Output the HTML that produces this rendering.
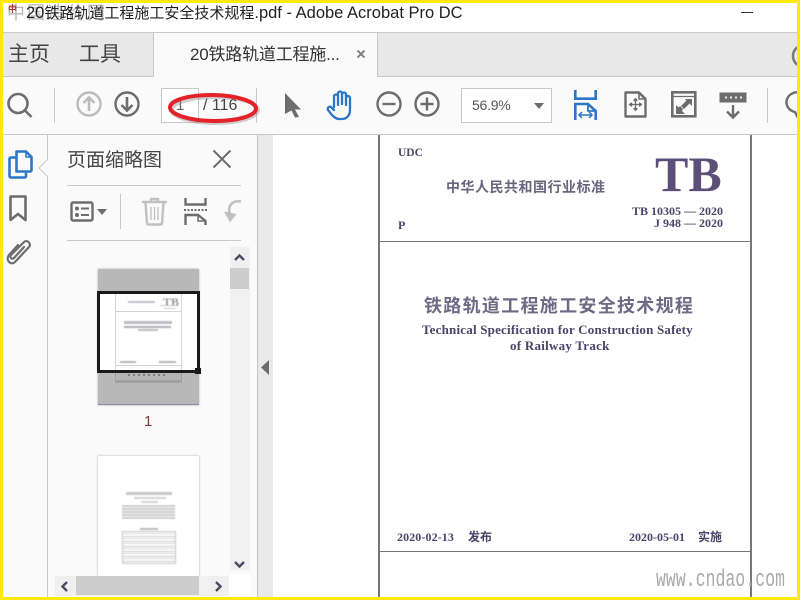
<!DOCTYPE html>
<html><head><meta charset="utf-8">
<style>
html,body{margin:0;padding:0;background:#fff}
#r{position:relative;width:800px;height:600px;overflow:hidden;background:#fff;font-family:"Liberation Sans","Noto Sans CJK SC",sans-serif;color:#333}
.a{position:absolute}
.t{position:absolute;white-space:nowrap;line-height:1}
svg{position:absolute;overflow:visible}
.s{font-family:"Liberation Serif","Noto Serif CJK SC",serif;font-weight:bold;color:#4a4468}
.b{filter:blur(.5px)}
</style></head><body>
<div id="r">
<!-- bars -->
<div class="a" style="left:0;top:32px;width:800px;height:1px;background:#c8c8c8"></div>
<div class="a" style="left:0;top:33px;width:800px;height:43px;background:#e8e8e8"></div>
<div class="a" style="left:153px;top:33px;width:225px;height:44px;background:#fafafa;border-left:1px solid #c8c8c8;border-right:1px solid #c8c8c8;box-sizing:border-box"></div>
<div class="a" style="left:0;top:76px;width:153px;height:1px;background:#c8c8c8"></div>
<div class="a" style="left:378px;top:76px;width:422px;height:1px;background:#c8c8c8"></div>
<div class="a" style="left:0;top:77px;width:800px;height:57px;background:#fafafa"></div>
<div class="a" style="left:0;top:134px;width:800px;height:1px;background:#c8c8c8"></div>

<!-- title -->
<div class="t" style="left:7px;top:4px;font-size:18px;letter-spacing:2px;color:#888;opacity:.6">中国造价网</div>
<div class="t" style="left:8px;top:5px;font-size:9px;color:#c9302c;font-weight:bold">中</div>
<div class="t" style="left:26px;top:5px;font-size:16.500px;color:#222">20<span style="font-size:15px">铁路轨道工程施工安全技术规程</span>.pdf - Adobe Acrobat Pro DC</div>
<div class="a" style="left:741px;top:12px;width:12px;height:1px;background:#333"></div>

<!-- tabs -->
<div class="t" style="left:8px;top:44px;font-size:21px;color:#444">主页</div>
<div class="t" style="left:79px;top:44px;font-size:21px;color:#444">工具</div>
<div class="t" style="left:190px;top:46px;font-size:17px;letter-spacing:-.2px;color:#333">20铁路轨道工程施...</div>
<svg style="left:356px;top:49px" width="10" height="10"><path d="M1.500 1.500L8.500 8.500M8.500 1.500L1.500 8.500" stroke="#777" stroke-width="1.800"/></svg>
<svg style="left:790px;top:44px" width="10" height="28"><circle cx="14" cy="12" r="11" fill="none" stroke="#777" stroke-width="2.500"/></svg>

<!-- toolbar -->
<svg style="left:7px;top:93px" width="26" height="26" fill="none" stroke="#6d6d6d" stroke-width="2.600"><circle cx="11" cy="10.500" r="9.500"/><path d="M17.500 17L24.500 24"/></svg>
<div class="a" style="left:54px;top:88px;width:1px;height:35px;background:#c8c8c8"></div>
<svg style="left:76px;top:91px" width="26" height="26" fill="none" stroke="#bcbcbc" stroke-width="2.400"><circle cx="13" cy="13" r="11.500"/><path d="M13 20V7M7.500 12L13 6.500L18.500 12" stroke-width="2.600"/></svg>
<svg style="left:114px;top:91px" width="26" height="26" fill="none" stroke="#6d6d6d" stroke-width="2.400"><circle cx="13" cy="13" r="11.500"/><path d="M13 6V19M7.500 14L13 19.500L18.500 14" stroke-width="2.600"/></svg>
<div class="a" style="left:161px;top:88px;width:38px;height:35px;border:1px solid #c8c8c8;box-sizing:border-box;background:#fff"></div>
<div class="t" style="left:176px;top:98px;font-size:15px;color:#666">1</div>
<div class="t" style="left:203px;top:98px;font-size:16px;color:#444">/ 116</div>
<div class="a" style="left:256px;top:88px;width:1px;height:35px;background:#c8c8c8"></div>
<svg style="left:168px;top:92px" width="94" height="34" fill="none"><ellipse cx="45.500" cy="16.500" rx="43" ry="13" stroke="#888" stroke-width="4" opacity=".4" transform="translate(1.500 1.500)"/><ellipse cx="45" cy="16" rx="43" ry="13" stroke="#e3222a" stroke-width="4" transform="rotate(1 45 16)"/></svg>
<svg style="left:284px;top:92px" width="18" height="26"><path d="M1 1L17 17.500L11 17.500L15 25L11 25.500L7.500 18.500L1 22Z" fill="#6d6d6d"/></svg>
<svg style="left:326px;top:90px" width="29" height="31" fill="none" stroke="#2b77c8" stroke-width="2.300" stroke-linejoin="round" stroke-linecap="round"><path d="M8 17V6.500a2 2 0 0 1 4 0V15M12 14V3.500a2 2 0 0 1 4 0V14M16 14V4.500a2 2 0 0 1 4 0V15M20 15V8a2 2 0 0 1 4 0V20c0 5-3 9-8 9h-3c-3 0-5-2-7-4L2 20c-1-2 1-4 3-3l3 3"/></svg>
<svg style="left:376px;top:91px" width="26" height="26" fill="none" stroke="#6d6d6d" stroke-width="2.400"><circle cx="13" cy="13" r="11.500"/><path d="M6.500 13H19.500"/></svg>
<svg style="left:414px;top:91px" width="26" height="26" fill="none" stroke="#6d6d6d" stroke-width="2.400"><circle cx="13" cy="13" r="11.500"/><path d="M6.500 13H19.500M13 6.500V19.500"/></svg>
<div class="a" style="left:461px;top:88px;width:91px;height:35px;border:1px solid #c8c8c8;box-sizing:border-box;background:#fff"></div>
<div class="t" style="left:472px;top:98px;font-size:14px;letter-spacing:-.25px;color:#555">56.9%</div>
<svg style="left:534px;top:103px" width="10" height="6"><path d="M0 0H10L5 6Z" fill="#6d6d6d"/></svg>
<svg style="left:574px;top:90px" width="23" height="30" fill="none" stroke="#2b77c8" stroke-width="2.600"><path d="M1.300 0V8.700H21.700V0M1.300 30V14H14L21.700 21V30"/><path d="M14 14V21H21.700" stroke-width="1.800"/><path d="M5 25H18M8 22L5 25L8 28M15 22L18 25L15 28" stroke-width="1.500"/></svg>
<svg style="left:624px;top:91px" width="23" height="27" fill="none" stroke="#6d6d6d" stroke-width="2.400" stroke-linejoin="round"><path d="M1.500 1.500H15L21.500 8V25.500H1.500Z"/><path d="M15 1.500V8H21.500" stroke-width="1.600"/><path d="M11.500 8V19M6 13.500H17M10 9.500H13L11.500 7.500ZM10 17.500H13L11.500 19.500ZM7.500 12V15L5.500 13.500ZM15.500 12V15L17.500 13.500Z" stroke-width="1.300"/></svg>
<svg style="left:671px;top:91px" width="26" height="27" fill="none" stroke="#6d6d6d" stroke-width="2.600"><rect x="1.300" y="1.300" width="23" height="24"/><path d="M1 5.500H25" stroke-width="1.200"/><path d="M14 8H21V15L18.500 12.500L13 18L10 15L15.500 9.500Z" fill="#6d6d6d" stroke="none"/><path d="M5 14V23H14L11 20L12 18L9 15L7.500 16.500Z" fill="#6d6d6d" stroke="none"/></svg>
<svg style="left:719px;top:92px" width="28" height="27" fill="none" stroke="#6d6d6d"><rect x="1" y="1" width="26" height="9" fill="#6d6d6d"/><path d="M6 5.500H8M11 5.500H13M16 5.500H18M21 5.500H23" stroke="#e8e8e8" stroke-width="2"/><path d="M14 13V25M8 19.500L14 25.500L20 19.500" stroke-width="2.400"/></svg>
<div class="a" style="left:767px;top:88px;width:1px;height:35px;background:#c8c8c8"></div>
<svg style="left:789px;top:91px" width="11" height="28" fill="none" stroke="#6d6d6d" stroke-width="2.400"><path d="M11 1.500A11 10 0 0 0 6 21L9 27L11 25"/></svg>

<!-- left rail + panel -->
<div class="a" style="left:0;top:135px;width:47px;height:465px;background:#fafafa"></div>
<div class="a" style="left:47px;top:135px;width:1px;height:465px;background:#c8c8c8"></div>
<div class="a" style="left:48px;top:135px;width:209px;height:465px;background:#fafafa"></div>
<div class="a" style="left:257px;top:135px;width:1px;height:465px;background:#c4c4c4"></div>
<div class="a" style="left:258px;top:135px;width:15px;height:465px;background:#e9e9e9"></div>
<svg style="left:38px;top:158px" width="11" height="20"><path d="M10 1L1 10L10 19" fill="#fafafa" stroke="#c8c8c8"/></svg>
<svg style="left:8px;top:150px" width="25" height="29" fill="none" stroke="#2b77c8" stroke-width="2.600" stroke-linejoin="round"><path d="M8.500 1.500H18L23.500 7V20C23.500 21 23 21.500 22 21.500H8.500Z"/><path d="M18 1.500V7H23.500" stroke-width="1.600"/><path d="M8.500 7.500H3A1.500 1.500 0 0 0 1.500 9V26A1.500 1.500 0 0 0 3 27.500H16.500A1.500 1.500 0 0 0 18 26V21.500"/></svg>
<svg style="left:9px;top:195px" width="18" height="28" fill="none" stroke="#6d6d6d" stroke-width="2.600"><path d="M1.500 1.500H16.500V25L9 19L1.500 25Z" stroke-linejoin="round"/></svg>
<svg style="left:5px;top:238px" width="26" height="28" fill="none" stroke="#6d6d6d" stroke-width="2.200" stroke-linecap="round"><path d="M19 9L9 20c-2 2-5-1-3-3L19 4c3-3 8 2 5 5L10 24c-4 4-10-2-6-7L13 7"/></svg>

<div class="t" style="left:67px;top:151px;font-size:19px;color:#444">页面缩略图</div>
<svg style="left:212px;top:149px" width="20" height="20"><path d="M1.500 1.500L18.500 18.500M18.500 1.500L1.500 18.500" stroke="#6d6d6d" stroke-width="2"/></svg>
<div class="a" style="left:67px;top:185px;width:174px;height:1px;background:#c8c8c8"></div>
<div class="a" style="left:67px;top:240px;width:174px;height:1px;background:#c8c8c8"></div>
<svg style="left:70px;top:201px" width="24" height="22" fill="none" stroke="#6d6d6d" stroke-width="2.400"><rect x="1.500" y="1.500" width="21" height="18" rx="1.500"/><circle cx="7" cy="7.500" r="2" fill="#6d6d6d" stroke="none"/><circle cx="7" cy="14" r="2" fill="#6d6d6d" stroke="none"/><path d="M11 7.500H19M11 14H19" stroke-width="2"/></svg>
<svg style="left:97px;top:209px" width="10" height="6"><path d="M0 0H10L5 6Z" fill="#6d6d6d"/></svg>
<div class="a" style="left:120px;top:194px;width:1px;height:35px;background:#c8c8c8"></div>
<svg style="left:142px;top:197px" width="26" height="29" fill="none" stroke="#c0c0c0" stroke-width="2.400"><path d="M0 5H25M9 5V2H16V5M3.500 6L5 26.500A1.500 1.500 0 0 0 6.500 27.500H18.500A1.500 1.500 0 0 0 20 26.500L21.500 6"/><path d="M9 10V23M12.500 10V23M16 10V23" stroke-width="1.300"/></svg>
<svg style="left:184px;top:198px" width="23" height="27" fill="none" stroke="#6d6d6d" stroke-width="2.400"><path d="M1.500 0V6.500H21.500V0M1.500 27V17H14L21.500 23V27"/><path d="M0 12H23" stroke-dasharray="2 1.500" stroke-width="2"/><path d="M14 17V23H21.500" stroke-width="1.500"/></svg>
<svg style="left:224px;top:199px" width="17" height="25" fill="none" stroke="#c0c0c0" stroke-width="2.600"><path d="M17 2.500C8 1 3 7 6 16"/><path d="M0 12.500L12.500 15L6 23.500Z" fill="#c0c0c0" stroke="none"/></svg>

<!-- thumb scrollbar -->
<div class="a" style="left:230px;top:247px;width:20px;height:323px;background:#f0f0f0"></div>
<div class="a" style="left:230px;top:268px;width:19px;height:21px;background:#cdcdcd"></div>
<svg style="left:234px;top:254px" width="11" height="7" fill="none"><path d="M1 6L5.500 1.500L10 6" stroke="#4e4a63" stroke-width="2.400"/></svg>
<svg style="left:234px;top:561px" width="11" height="7" fill="none"><path d="M1 1L5.500 5.500L10 1" stroke="#4e4a63" stroke-width="2.400"/></svg>

<!-- thumb 1 -->
<div class="a" style="left:98px;top:269px;width:101px;height:136px;background:#b8b8b8;box-shadow:0 0 2px #aaa;border-bottom:1px solid #8d8a9c;box-sizing:border-box"></div>
<div class="a" style="left:115px;top:372px;width:67px;height:11px;background:#b4b4b4;border:1px solid #a0a0a0;border-bottom:3px solid #a0a0a0;border-top:0;box-sizing:border-box"></div>
<div class="a" style="left:128px;top:374px;width:40px;height:2px;background:repeating-linear-gradient(90deg,#808080 0 2px,transparent 2px 5px)"></div>
<div class="a" style="left:97px;top:291px;width:103px;height:82px;background:#fff;border:3px solid #1a1a1a;box-sizing:border-box"></div>
<div class="a" style="left:115px;top:294px;width:67px;height:76px;border-left:1px solid #d4d4d4;border-right:1px solid #d4d4d4;box-sizing:border-box"></div>
<div class="a" style="left:116px;top:311px;width:65px;height:1px;background:#d4d4d4"></div>
<div class="a" style="left:116px;top:365px;width:65px;height:1px;background:#d4d4d4"></div>
<div class="b">
<div class="t" style="left:163px;top:296px;font-size:12px;font-weight:bold;font-family:'Liberation Serif',serif;color:#99959f">TB</div>
<div class="a" style="left:128px;top:301px;width:27px;height:2px;background:#c0c0c8"></div>
<div class="a" style="left:160px;top:305px;width:16px;height:1px;background:#c8c8cc"></div>
<div class="a" style="left:164px;top:308px;width:12px;height:1px;background:#c8c8cc"></div>
<div class="a" style="left:124px;top:321px;width:48px;height:3px;background:#bcbcc2"></div>
<div class="a" style="left:124px;top:326px;width:47px;height:2px;background:#acacb4"></div>
<div class="a" style="left:138px;top:329px;width:20px;height:2px;background:#bcbcc2"></div>
<div class="a" style="left:120px;top:361px;width:16px;height:2px;background:#b4b4ba"></div>
<div class="a" style="left:159px;top:361px;width:17px;height:2px;background:#b4b4ba"></div>
</div>
<div class="a" style="left:195px;top:368px;width:6px;height:6px;background:#1a1a1a"></div>
<div class="t" style="left:144px;top:414px;font-size:15px;color:#7a3a30">1</div>

<!-- thumb 2 -->
<div class="a" style="left:98px;top:456px;width:101px;height:120px;background:#fff;box-shadow:0 0 2px #aaa"></div>
<div class="b">
<div class="a" style="left:126px;top:492px;width:46px;height:3px;background:#c8c8c8"></div>
<div class="a" style="left:134px;top:497px;width:32px;height:2px;background:#d4d4d4"></div>
<div class="a" style="left:141px;top:501px;width:17px;height:2px;background:#d4d4d4"></div>
<div class="a" style="left:122px;top:505px;width:53px;height:14px;background:repeating-linear-gradient(#cecece 0 2px,#f6f6f6 2px 3px)"></div>
<div class="a" style="left:140px;top:528px;width:18px;height:2px;background:#bcbcbc"></div>
<div class="a" style="left:122px;top:531px;width:54px;height:33px;border:1px solid #c8c8c8;box-sizing:border-box;background:repeating-linear-gradient(#fff 0 1px,#d8d8d8 1px 2px,#fff 2px 4px,#cccccc 4px 5px)"></div>
</div>

<!-- h scrollbar on top of thumb -->
<div class="a" style="left:55px;top:576px;width:174px;height:20px;background:#f0f0f0"></div>
<div class="a" style="left:76px;top:576px;width:123px;height:19px;background:#cdcdcd"></div>
<svg style="left:61px;top:581px" width="7" height="11" fill="none"><path d="M6 1L1.500 5.500L6 10" stroke="#4e4a63" stroke-width="2.400"/></svg>
<svg style="left:215px;top:581px" width="7" height="11" fill="none"><path d="M1 1L5.500 5.500L1 10" stroke="#4e4a63" stroke-width="2.400"/></svg>
<div class="a" style="left:229px;top:575px;width:21px;height:21px;background:#fff"></div>

<!-- page -->
<div class="a" style="left:378px;top:135px;width:2px;height:465px;background:#777"></div>
<div class="a" style="left:750px;top:135px;width:2px;height:465px;background:#777"></div>
<div class="a" style="left:380px;top:241px;width:370px;height:1px;background:#777"></div>
<div class="a" style="left:380px;top:551px;width:370px;height:1px;background:#777"></div>
<div class="t s" style="left:398px;top:148px;font-size:11.500px">UDC</div>
<div class="t" style="left:446px;top:180px;font-size:14px;letter-spacing:.5px;color:#6a667e;font-family:'Noto Sans CJK SC',sans-serif;font-weight:700">中华人民共和国行业标准</div>
<div class="t s" style="left:655px;top:149px;font-size:50px;color:#5b5078">TB</div>
<div class="t s" style="right:77px;top:205px;font-size:12px">TB 10305 — 2020</div>
<div class="t s" style="right:77px;top:217px;font-size:12px">J 948 — 2020</div>
<div class="t s" style="left:398px;top:219px;font-size:12px">P</div>
<div class="t" style="left:424px;top:296px;font-size:18px;letter-spacing:1.300px;color:#6e6a84;font-family:'Noto Sans CJK SC',sans-serif;font-weight:700">铁路轨道工程施工安全技术规程</div>
<div class="t s" style="left:422px;top:323px;font-size:13px;letter-spacing:.2px">Technical Specification for Construction Safety</div>
<div class="t s" style="left:510px;top:339px;font-size:13px;letter-spacing:.25px">of Railway Track</div>
<div class="t s" style="left:397px;top:531px;font-size:12px;letter-spacing:.1px">2020-02-13</div>
<div class="t s" style="left:468px;top:531px;font-size:12px;font-family:'Noto Sans CJK SC',sans-serif">发布</div>
<div class="t s" style="left:629px;top:531px;font-size:12px">2020-05-01</div>
<div class="t s" style="left:698px;top:531px;font-size:12px;font-family:'Noto Sans CJK SC',sans-serif">实施</div>
<div class="t" style="left:656px;top:569px;font-size:24px;color:#aaa;font-family:'Liberation Mono',monospace;transform:scaleX(.68);transform-origin:0 0;letter-spacing:.2px">www.cndao.com</div>

<!-- yellow border -->
<div class="a" style="left:0;top:0;width:800px;height:3px;background:#ffe90a"></div>
<div class="a" style="left:0;top:597px;width:800px;height:3px;background:#ffe90a"></div>
<div class="a" style="left:0;top:0;width:3px;height:600px;background:#ffe90a"></div>
<div class="a" style="left:797px;top:0;width:3px;height:600px;background:#ffe90a"></div>
<svg style="left:261px;top:360px" width="8" height="15"><path d="M8 0V15L0 7.500Z" fill="#6d6d6d"/></svg>
</div>
</body></html>
